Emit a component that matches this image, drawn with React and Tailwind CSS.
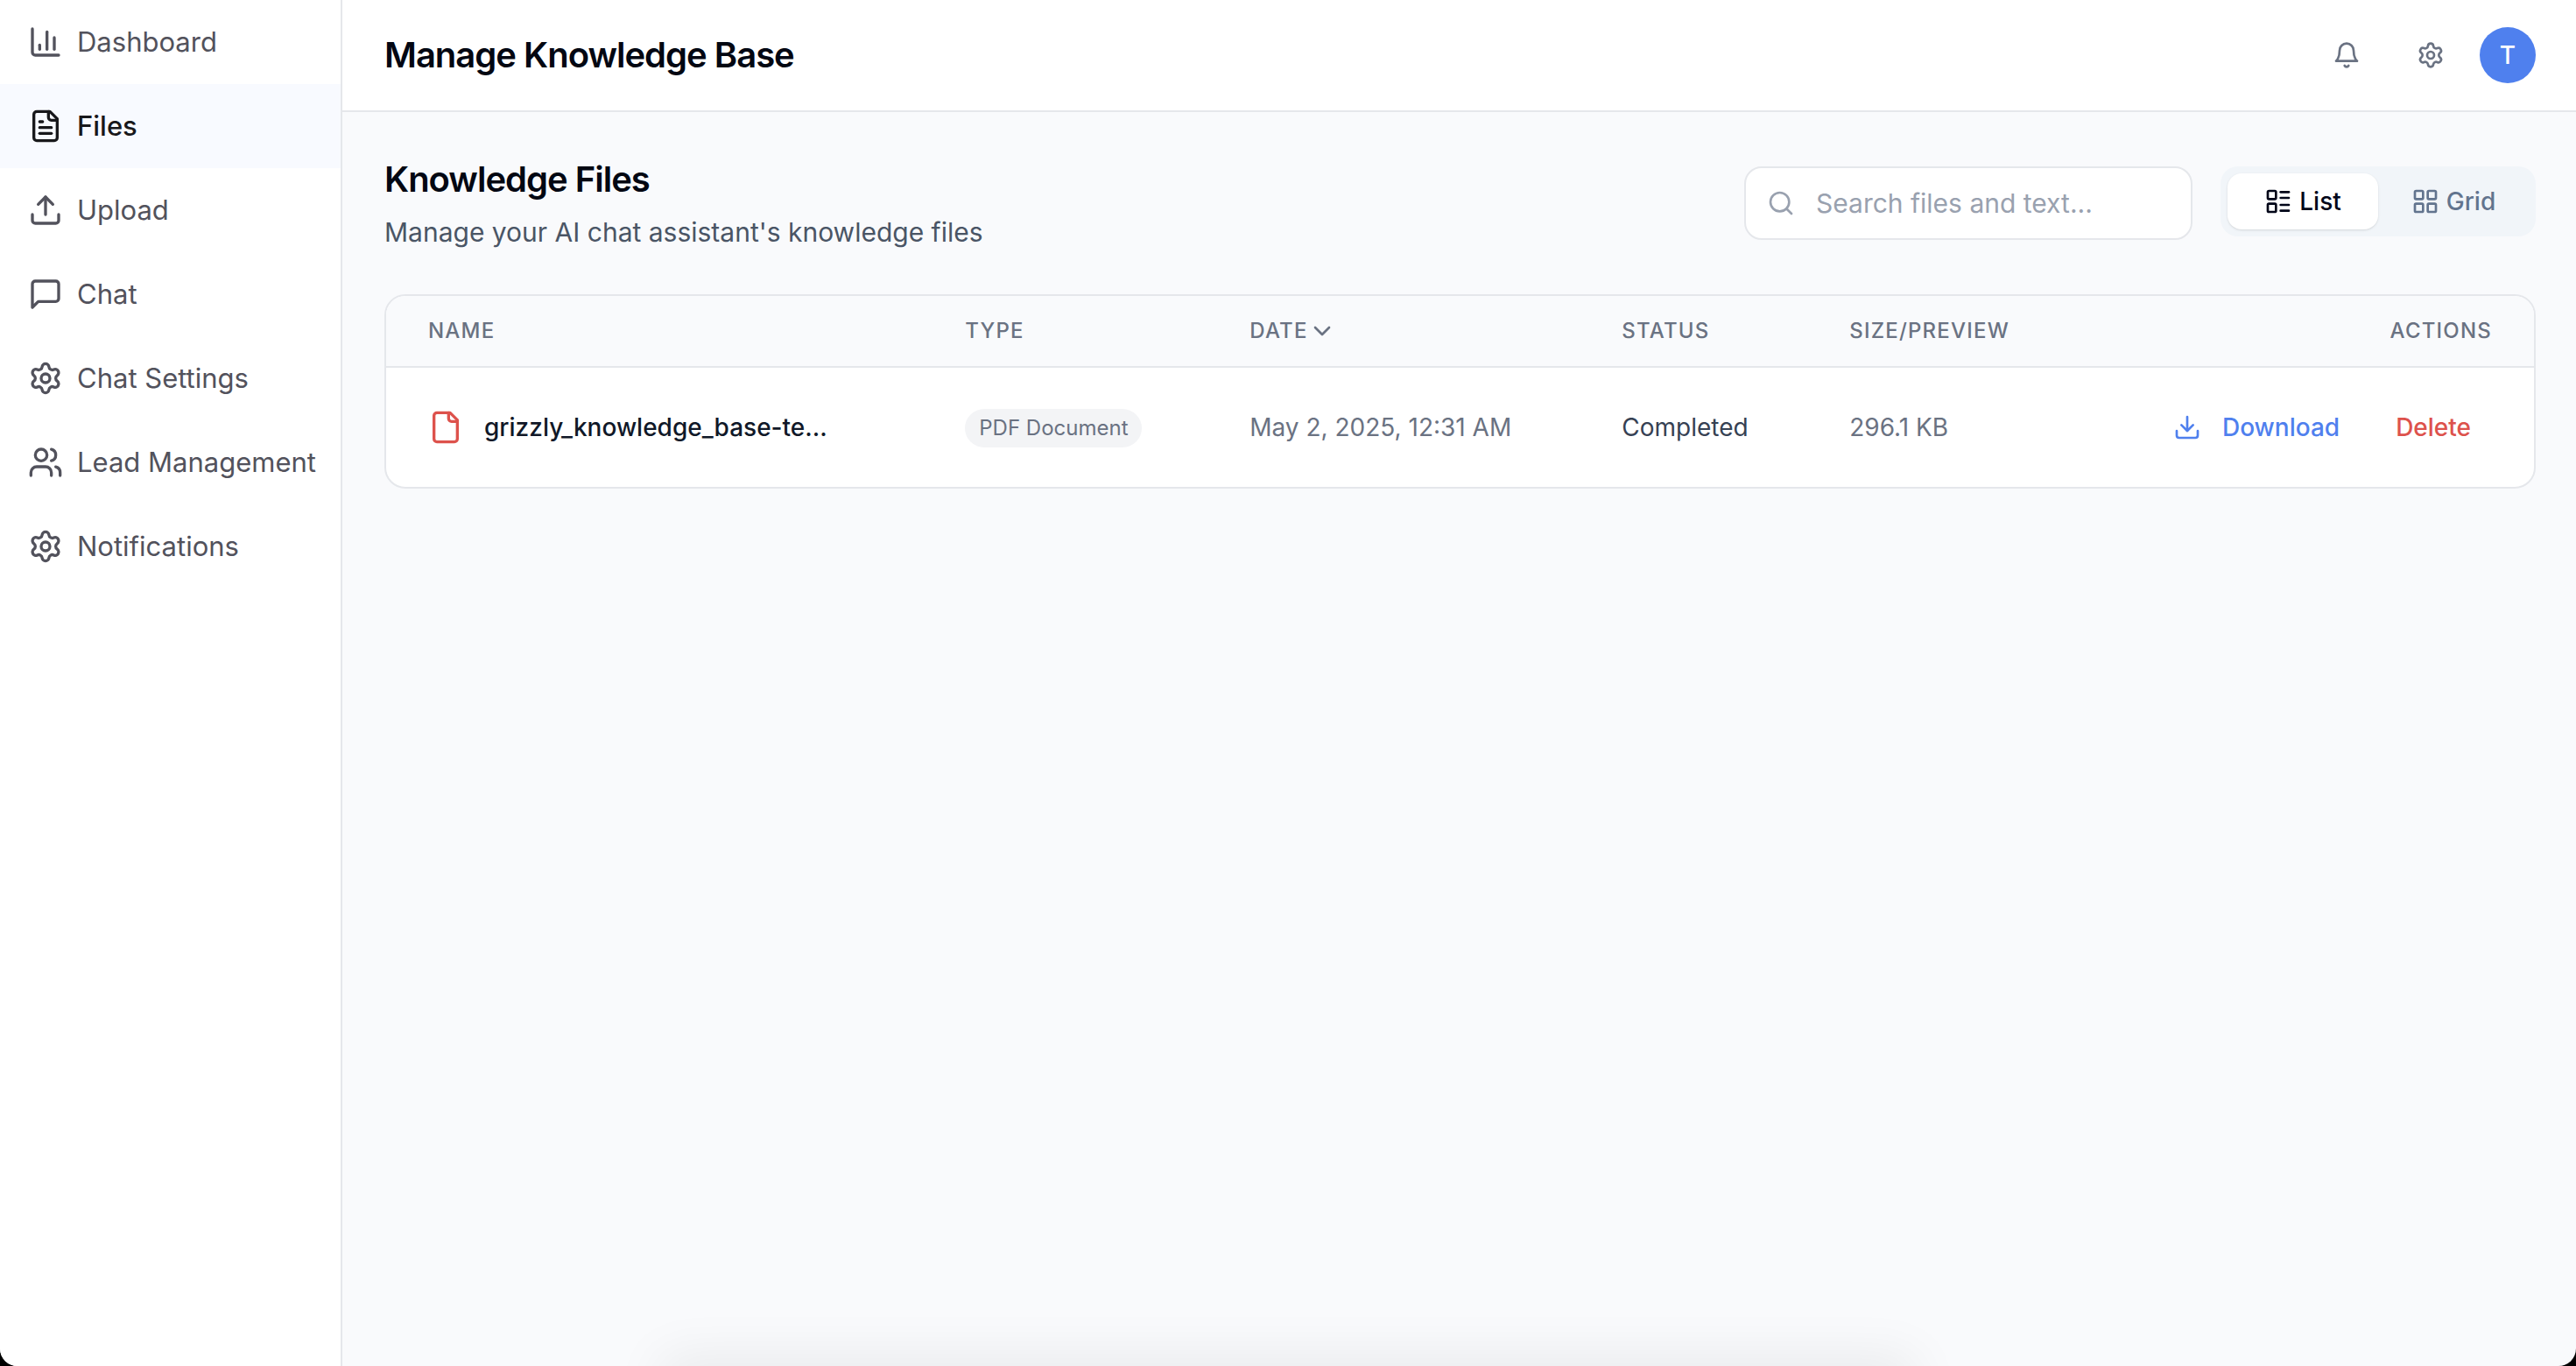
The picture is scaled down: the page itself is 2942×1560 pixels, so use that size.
import { ChevronDown, Download, LayoutGrid, LayoutList, Search, Settings, Upload, Users } from "lucide-react";

function Icon({ paths, className }) {
  return (
    <svg viewBox="0 0 24 24" fill="none" stroke="currentColor" strokeWidth="2" strokeLinecap="round" strokeLinejoin="round" className={className} aria-hidden="true">
      {paths.map((d) => (
        <path key={d} d={d} />
      ))}
    </svg>
  );
}

const sheet = ["M15 2H6a2 2 0 0 0-2 2v16a2 2 0 0 0 2 2h12a2 2 0 0 0 2-2V7Z", "M14 2v4a2 2 0 0 0 2 2h4"];

const ChartIcon = (props) => (
  <Icon {...props} paths={["M3 3v16a2 2 0 0 0 2 2h16", "M8 17v-3", "M13 17V5", "M18 17V9"]} />
);
const FileIcon = (props) => <Icon {...props} paths={sheet} />;
const FileTextIcon = (props) => <Icon {...props} paths={[...sheet, "M10 9H8", "M16 13H8", "M16 17H8"]} />;
const ChatIcon = (props) => (
  <Icon {...props} paths={["M21 15a2 2 0 0 1-2 2H7l-4 4V5a2 2 0 0 1 2-2h14a2 2 0 0 1 2 2z"]} />
);
const BellIcon = (props) => (
  <Icon {...props} paths={["M6 8a6 6 0 0 1 12 0c0 7 3 9 3 9H3s3-2 3-9", "M10.3 21a1.94 1.94 0 0 0 3.4 0"]} />
);

const navItems = [
  { label: "Dashboard", icon: ChartIcon },
  { label: "Files", icon: FileTextIcon, active: true },
  { label: "Upload", icon: Upload },
  { label: "Chat", icon: ChatIcon },
  { label: "Chat Settings", icon: Settings },
  { label: "Lead Management", icon: Users },
  { label: "Notifications", icon: Settings },
];

function Sidebar() {
  return (
    <aside className="w-[391px] shrink-0 border-r-2 border-gray-200 bg-white">
      <nav aria-label="Main">
        {navItems.map(({ label, icon: ItemIcon, active }) => (
          <a
            key={label}
            href="#"
            aria-current={active ? "page" : undefined}
            className={
              active
                ? "flex h-24 items-center gap-4 bg-[#f8faff] px-8 text-[31px] font-medium whitespace-nowrap text-zinc-900"
                : "flex h-24 items-center gap-4 px-8 text-[31px] whitespace-nowrap text-zinc-600"
            }
          >
            <ItemIcon className="size-10 shrink-0" />
            {label}
          </a>
        ))}
      </nav>
    </aside>
  );
}

function Header() {
  return (
    <header className="flex h-32 items-center justify-between border-b-2 border-gray-200 bg-white pr-[46px] pl-12">
      <h1 className="text-[40px] font-semibold tracking-tight text-gray-950">Manage Knowledge Base</h1>
      <div className="flex items-center gap-8 text-gray-500">
        <button type="button" aria-label="Notifications" className="p-4">
          <BellIcon className="size-8" />
        </button>
        <div className="flex items-center gap-6">
          <button type="button" aria-label="Settings" className="p-4">
            <Settings className="size-8" />
          </button>
          <button type="button" aria-label="Account" className="size-16 rounded-full bg-[#4f80ee] text-[28px] font-medium text-white">T</button>
        </div>
      </div>
    </header>
  );
}

function Toolbar() {
  return (
    <div className="flex items-start justify-between">
      <div>
        <h2 className="text-[40px] leading-[58px] font-semibold tracking-tight text-gray-950">Knowledge Files</h2>
        <p className="mt-2 text-[30px] leading-[46px] text-gray-600">Manage your AI chat assistant's knowledge files</p>
      </div>
      <div className="mt-[14px] flex items-start gap-8">
        <div className="flex h-[84px] w-[512px] items-center gap-6 rounded-[20px] border-2 border-gray-200 bg-white px-6">
          <Search className="size-8 shrink-0 text-gray-400" />
          <input type="search" aria-label="Search files and text" placeholder="Search files and text..." className="min-w-0 flex-1 bg-transparent text-[30px] outline-none placeholder:text-gray-400" />
        </div>
        <div className="flex rounded-[20px] bg-slate-100 p-2 text-[28px] font-medium">
          <button type="button" aria-pressed="true" className="flex h-16 w-[172px] items-center justify-center gap-2 rounded-2xl bg-white text-slate-950 shadow-sm">
            <LayoutList className="size-8" />
            List
          </button>
          <button type="button" aria-pressed="false" className="flex h-16 w-[172px] items-center justify-center gap-2 rounded-2xl text-slate-500">
            <LayoutGrid className="size-8" />
            Grid
          </button>
        </div>
      </div>
    </div>
  );
}

const thClass = "h-[82px] border-b-2 border-gray-200 px-12 font-medium";

function FilesTable() {
  return (
    <div className="mt-12 overflow-hidden rounded-3xl border-2 border-gray-200 bg-white">
      <table className="w-full table-fixed border-separate border-spacing-0 text-left text-[28px] whitespace-nowrap">
        <colgroup>
          <col className="w-[25%]" />
          <col className="w-[325px]" />
          <col className="w-[425px]" />
          <col className="w-[260px]" />
          <col className="w-[300px]" />
          <col />
        </colgroup>
        <thead className="bg-[#f9fafc] text-2xl tracking-wider text-gray-500 uppercase">
          <tr>
            <th scope="col" className={thClass}>Name</th>
            <th scope="col" className={thClass}>Type</th>
            <th scope="col" aria-sort="descending" className={thClass}>
              <button type="button" className="flex items-center tracking-wider uppercase">
                Date
                <ChevronDown className="size-8" />
              </button>
            </th>
            <th scope="col" className={thClass}>Status</th>
            <th scope="col" className={thClass}>Size/Preview</th>
            <th scope="col" className="h-[82px] border-b-2 border-gray-200 px-12 text-right font-medium">Actions</th>
          </tr>
        </thead>
        <tbody>
          <tr className="h-[136px] text-gray-500">
            <td className="px-12">
              <div className="flex items-center gap-6 font-medium text-gray-900">
                <FileIcon className="size-10 shrink-0 text-[#dd524c]" />
                grizzly_knowledge_base-te...
              </div>
            </td>
            <td className="px-12">
              <span className="inline-flex h-11 items-center rounded-full bg-gray-100 px-4 text-2xl">PDF Document</span>
            </td>
            <td className="px-12">May 2, 2025, 12:31 AM</td>
            <td className="px-12 text-gray-700">Completed</td>
            <td className="px-12">296.1 KB</td>
            <td className="px-12">
              <div className="flex items-center justify-end gap-4 font-medium">
                <button type="button" className="flex items-center gap-6 px-6 text-[#4f80ee]">
                  <Download className="size-8" />
                  Download
                </button>
                <button type="button" className="px-6 text-[#dd524c]">Delete</button>
              </div>
            </td>
          </tr>
        </tbody>
      </table>
    </div>
  );
}

export default function App() {
  return (
    <div className="bg-black">
      <div className="relative flex min-h-screen overflow-hidden rounded-b-[20px] bg-[#f9fafc] font-['Inter',sans-serif]">
        <Sidebar />
        <div className="min-w-0 flex-1">
          <Header />
          <main className="pt-12 pr-[46px] pl-12">
            <Toolbar />
            <FilesTable />
          </main>
        </div>
        <div aria-hidden="true" className="absolute inset-x-[26%] top-full h-10 shadow-[0_0_60px_10px_rgba(0,0,0,0.07)]" />
      </div>
    </div>
  );
}
